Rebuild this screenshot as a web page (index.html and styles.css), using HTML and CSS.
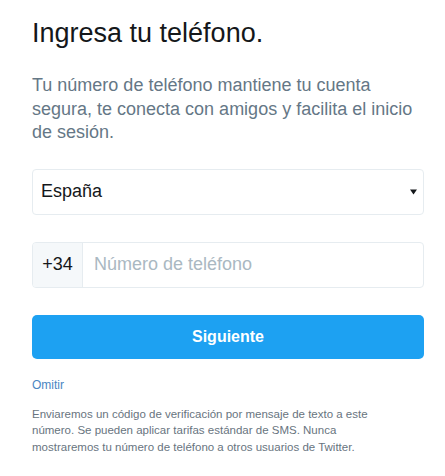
FILE: index.html
```html
<!DOCTYPE html>
<html lang="es">
<head>
<meta charset="utf-8">
<title>Ingresa tu teléfono</title>
<link rel="stylesheet" href="styles.css">
</head>
<body>
<main class="page">
  <h1 class="title">Ingresa tu teléfono.</h1>
  <p class="lead">Tu número de teléfono mantiene tu cuenta segura, te conecta con amigos y facilita el inicio de sesión.</p>
  <div class="select">
    <span class="select-value">España</span>
    <svg class="select-arrow" width="7" height="6" viewBox="0 0 7 6"><path d="M0 0.5H7L3.5 5.5Z" fill="#14171a"/></svg>
  </div>
  <div class="phone">
    <span class="prefix">+34</span>
    <span class="placeholder">Número de teléfono</span>
  </div>
  <button class="next">Siguiente</button>
  <a class="skip" href="#">Omitir</a>
  <p class="note">Enviaremos un código de verificación por mensaje de texto a este número. Se pueden aplicar tarifas estándar de SMS. Nunca mostraremos tu número de teléfono a otros usuarios de Twitter.</p>
</main>
</body>
</html>
```
FILE: styles.css
```css
html, body {
  margin: 0;
  background: #ffffff;
}
body {
  font-family: "Liberation Sans", Arial, sans-serif;
}
.page {
  display: flex;
  flex-direction: column;
  align-items: stretch;
  padding: 17px 21px 0 32px;
}
.title {
  margin: 0;
  font-size: 27px;
  line-height: 32px;
  font-weight: normal;
  color: #14171a;
}
.lead {
  margin: 25px 0 0;
  font-size: 18px;
  line-height: 23.5px;
  color: #657786;
}
.select {
  margin-top: 24px;
  height: 46px;
  box-sizing: border-box;
  border: 1px solid #e6ecf0;
  border-radius: 4px;
  display: flex;
  align-items: center;
  justify-content: space-between;
  padding: 0 6px 0 8px;
}
.select-value {
  font-size: 18px;
  color: #14171a;
}
.select-arrow {
  display: block;
}
.phone {
  margin-top: 27px;
  height: 46px;
  box-sizing: border-box;
  border: 1px solid #e6ecf0;
  border-radius: 4px;
  display: flex;
  align-items: stretch;
  overflow: hidden;
}
.prefix {
  width: 50px;
  box-sizing: border-box;
  background: #f5f8fa;
  border-right: 1px solid #e6ecf0;
  display: flex;
  align-items: center;
  justify-content: center;
  font-size: 18px;
  color: #14171a;
}
.placeholder {
  display: flex;
  align-items: center;
  padding-left: 11px;
  font-size: 18px;
  color: #aab8c2;
}
.next {
  margin-top: 27px;
  height: 44px;
  border: none;
  border-radius: 5px;
  background: #1da1f2;
  color: #ffffff;
  font-family: "Liberation Sans", Arial, sans-serif;
  font-size: 16px;
  font-weight: bold;
  padding: 0;
}
.skip {
  margin-top: 18px;
  align-self: flex-start;
  font-size: 12px;
  line-height: 16px;
  color: #4a86c2;
  text-decoration: none;
}
.note {
  margin: 13px 0 0;
  max-width: 355px;
  font-size: 11.5px;
  line-height: 16.5px;
  color: #687480;
}
```
